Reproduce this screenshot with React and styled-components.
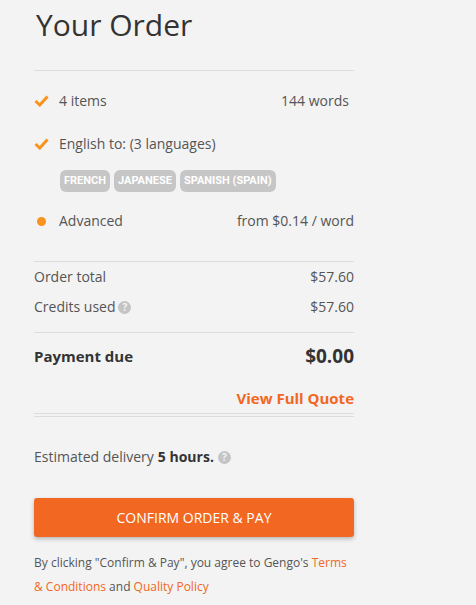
import React from "react"
import styled, { createGlobalStyle } from "styled-components"

const GlobalStyle = createGlobalStyle`
  html, body {
    margin: 0;
    padding: 0;
    background: #f3f3f3;
    font-family: "Open Sans", "Liberation Sans", sans-serif;
    color: #555;
  }
`

const orange = "#f26722"

const Page = styled.div`
  min-height: 605px;
  padding: 0 0 0 34px;
  box-sizing: border-box;
  border-left: 8px solid #f5f5f5;
  margin-left: -8px;
`

const Panel = styled.div`
  width: 320px;
  display: flex;
  flex-direction: column;
`

const Title = styled.h1`
  margin: 4px 0 0 2px;
  font-size: 30px;
  font-weight: 400;
  color: #333;
  line-height: 42px;
`

const Divider = styled.hr`
  border: none;
  border-top: 1px solid #dcdcdc;
  margin: ${props => props.margin || "0"};
`

const DoubleDivider = styled.div`
  height: 2px;
  border-top: 1px solid #dcdcdc;
  border-bottom: 1px solid #dcdcdc;
  margin: ${props => props.margin || "0"};
`

const Row = styled.div`
  display: flex;
  align-items: center;
  justify-content: space-between;
  font-size: 14px;
  line-height: 20px;
  height: ${props => props.height || 20}px;
  padding-right: ${props => props.pr || 0}px;
  margin-top: ${props => props.mt || 0}px;
`

const Label = styled.div`
  display: flex;
  align-items: center;
  gap: ${props => props.gap ?? 10}px;
`

const IconSlot = styled.span`
  width: 15px;
  display: inline-flex;
  justify-content: center;
`

const Dot = styled.span`
  width: 9px;
  height: 9px;
  border-radius: 50%;
  background: #f7931e;
`

const Tags = styled.div`
  display: flex;
  gap: 4px;
  padding-left: 26px;
  margin: 16px 0 0;
`

const Tag = styled.span`
  background: #c6c6c6;
  color: #fff;
  font-family: "Roboto", "Liberation Sans", sans-serif;
  font-weight: 700;
  font-size: 11px;
  line-height: 22px;
  height: 22px;
  padding: 0 4px;
  border-radius: 6px;
`

const Help = styled.span`
  display: inline-flex;
  align-items: center;
  justify-content: center;
  width: 13px;
  height: 13px;
  border-radius: 50%;
  background: #c4c4c4;
  color: #f3f3f3;
  font-size: 10px;
  font-weight: 700;
  line-height: 1;
  margin-left: ${props => props.ml ?? 3}px;
`

const Strong = styled.span`
  font-weight: 700;
  color: #333;
  font-size: ${props => props.size || 15}px;
`

const QuoteLink = styled.a`
  align-self: flex-end;
  color: ${orange};
  font-weight: 700;
  font-size: 15px;
  line-height: 20px;
  text-decoration: none;
  margin-top: 20px;
`

const Delivery = styled.p`
  margin: 30px 0 0;
  font-size: 14px;
  line-height: 20px;
  display: flex;
  align-items: center;
  b {
    color: #333;
    margin-left: 4px;
  }
`

const Button = styled.button`
  margin-top: 31px;
  height: 39px;
  border: none;
  border-radius: 3px;
  background: ${orange};
  color: #fff;
  font-family: inherit;
  font-size: 14px;
  box-shadow: 0 2px 4px rgba(0, 0, 0, 0.25);
  cursor: pointer;
`

const Terms = styled.p`
  margin: 14px 0 0;
  font-size: 12px;
  line-height: 24px;
  a {
    color: ${orange};
    text-decoration: none;
  }
`

const Check = () => (
  <svg width="15" height="12" viewBox="0 0 15 12">
    <polyline
      points="1.5,6 5.8,10 13.5,1.5"
      fill="none"
      stroke="#f7931e"
      strokeWidth="3"
      strokeLinejoin="miter"
    />
  </svg>
)

const languages = ["FRENCH", "JAPANESE", "SPANISH (SPAIN)"]

export default function App() {
  return (
    <>
      <GlobalStyle />
      <Page>
        <Panel>
          <Title>Your Order</Title>
          <Divider margin="24px 0 20px" />
          <Row pr={5}>
            <Label>
              <IconSlot><Check /></IconSlot>
              <span>4 items</span>
            </Label>
            <span>144 words</span>
          </Row>
          <Row mt={23}>
            <Label>
              <IconSlot><Check /></IconSlot>
              <span>English to: (3 languages)</span>
            </Label>
          </Row>
          <Tags>
            {languages.map(l => (
              <Tag key={l}>{l}</Tag>
            ))}
          </Tags>
          <Row mt={19}>
            <Label>
              <IconSlot><Dot /></IconSlot>
              <span>Advanced</span>
            </Label>
            <span>from $0.14 / word</span>
          </Row>
          <Divider margin="30px 0 5px" />
          <Row>
            <span>Order total</span>
            <span>$57.60</span>
          </Row>
          <Row mt={10}>
            <Label gap={0}>
              <span>Credits used</span>
              <Help>?</Help>
            </Label>
            <span>$57.60</span>
          </Row>
          <Divider margin="15px 0 11px" />
          <Row height={24}>
            <Strong>Payment due</Strong>
            <Strong size={19}>$0.00</Strong>
          </Row>
          <QuoteLink href="#">View Full Quote</QuoteLink>
          <DoubleDivider margin="5px 0 0" />
          <Delivery>
            Estimated delivery <b>5 hours.</b>
            <Help ml={4}>?</Help>
          </Delivery>
          <Button>CONFIRM ORDER &amp; PAY</Button>
          <Terms>
            By clicking "Confirm &amp; Pay", you agree to Gengo's{" "}
            <a href="#">Terms &amp; Conditions</a> and{" "}
            <a href="#">Quality Policy</a>
          </Terms>
        </Panel>
      </Page>
    </>
  )
}
